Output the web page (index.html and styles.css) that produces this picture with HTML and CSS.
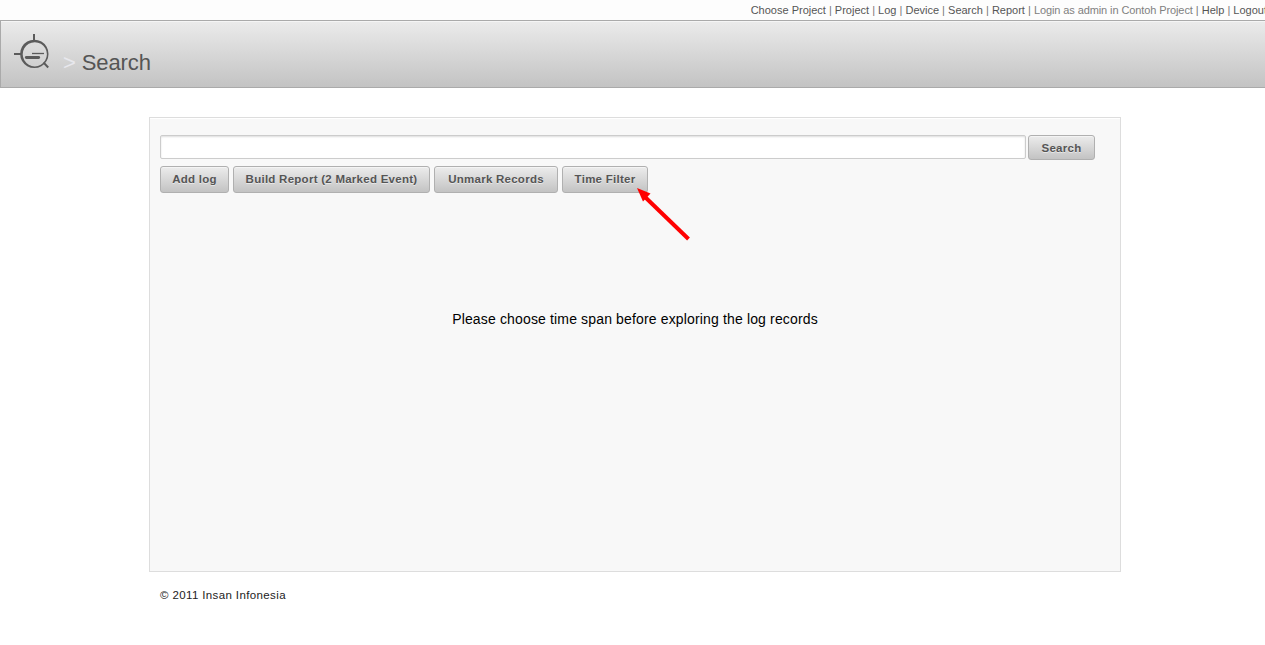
FILE: index.html
```html
<!DOCTYPE html>
<html lang="en">
<head>
<meta charset="utf-8">
<title>Search</title>
<link rel="stylesheet" href="styles.css">
</head>
<body>
<nav class="topnav">
  <span><a>Choose Project</a> | <a>Project</a> | <a>Log</a> | <a>Device</a> | <a>Search</a> | <a>Report</a> | <span class="status">Login as admin in Contoh Project</span> | <a>Help</a> | <a>Logout</a></span>
</nav>
<header class="header">
  <svg class="logo" width="36" height="36" viewBox="0 0 36 36" fill="none" stroke="#5b5b5b">
    <path d="M20 0V7M0 20h7" stroke-width="2"/>
    <path fill="#5b5b5b" fill-rule="evenodd" stroke="none" d="M20.300 5.700a14.200 14.200 0 1 0 .01 0ZM20.800 8.200a12.100 12.100 0 1 1-.01 0Z"/>
    <path d="M29.500 28.500l4.700 5" stroke-width="2"/>
    <path d="M12.300 23.500h12.400" stroke-width="2.800" stroke-linecap="round"/>
    <path d="M18 19.500h12" stroke-width="1.300"/>
  </svg>
  <h1 class="title"><span class="chevron">&gt;</span> <span>Search</span></h1>
</header>
<main class="panel">
  <form class="search">
    <input class="field" type="text" aria-label="Search">
    <button class="button search-button" type="button">Search</button>
  </form>
  <div class="actions">
    <button class="button add" type="button">Add log</button>
    <button class="button build" type="button">Build Report (2 Marked Event)</button>
    <button class="button unmark" type="button">Unmark Records</button>
    <button class="button time" type="button">Time Filter</button>
  </div>
  <p class="message">Please choose time span before exploring the log records</p>
  <svg class="pointer" width="54" height="54" viewBox="0 0 54 54">
    <path d="M51.500 51L8 9" stroke="#f00" stroke-width="4"/>
    <path d="M0 0l13.500 5.500-7.500 8z" fill="#f00"/>
  </svg>
</main>
<footer class="footer">© 2011 Insan Infonesia</footer>
</body>
</html>
```
FILE: styles.css
```css
* { box-sizing: border-box; }
body {
  margin: 0;
  height: 645px;
  overflow: hidden;
  background: #fff;
  font-family: "Liberation Sans", Arial, sans-serif;
}
.topnav {
  display: flex;
  justify-content: flex-end;
  height: 20px;
  margin-right: -2px;
  background: #fdfdfd;
  color: #777;
  font-size: 11px;
  line-height: 20px;
  white-space: nowrap;
}
.topnav a { color: #555; }
.status { color: #808080; letter-spacing: -.1px; }
.header {
  display: flex;
  height: 68px;
  padding: 13px 0 0 13px;
  border: 1px solid #aaa;
  border-right: 0;
  background: linear-gradient(#ebebeb, #c3c3c3);
  box-shadow: inset 0 1px #f5f5f5;
}
.title {
  margin: 15px 0 0 13px;
  color: #555;
  font-size: 22px;
  font-weight: normal;
  line-height: 28px;
  letter-spacing: -.1px;
}
.chevron { color: #e8e8ed; }
.panel {
  position: relative;
  width: 972px;
  height: 455px;
  margin: 29px 0 0 149px;
  padding: 17px 10px 0;
  border: 1px solid #ddd;
  background: #f8f8f8;
  box-shadow: inset 0 1px #fff;
}
.search { display: flex; gap: 2px; }
.field {
  width: 866px;
  height: 24px;
  padding: 2px 5px;
  border: 1px solid #ccc;
  border-radius: 2px;
  background: #fff;
  box-shadow: inset 0 1px 2px #ddd;
}
.button {
  height: 27px;
  padding: 0 0 1px;
  border: 1px solid #b0b0b0;
  border-radius: 3px;
  background: linear-gradient(#ececec, #c3c3c3);
  box-shadow: inset 0 1px #f4f4f4;
  color: #555;
  font: bold 11.5px "Liberation Sans", Arial, sans-serif;
  letter-spacing: .26px;
  text-shadow: 0 1px rgba(255, 255, 255, .5);
  white-space: nowrap;
}
.search-button { width: 67px; height: 25px; padding: 0; }
.actions { display: flex; gap: 4px; margin-top: 6px; }
.add { width: 69px; }
.build { width: 197px; }
.unmark { width: 124px; }
.time { width: 86px; }
.message {
  margin: 117px 0 0;
  color: #000;
  font-size: 14px;
  line-height: 18px;
  letter-spacing: .15px;
  text-align: center;
}
.pointer { position: absolute; left: 486.5px; top: 70px; }
.footer {
  margin: 16px 0 0 160px;
  color: #222;
  font-size: 11.5px;
  line-height: 14px;
  letter-spacing: .38px;
}
```
